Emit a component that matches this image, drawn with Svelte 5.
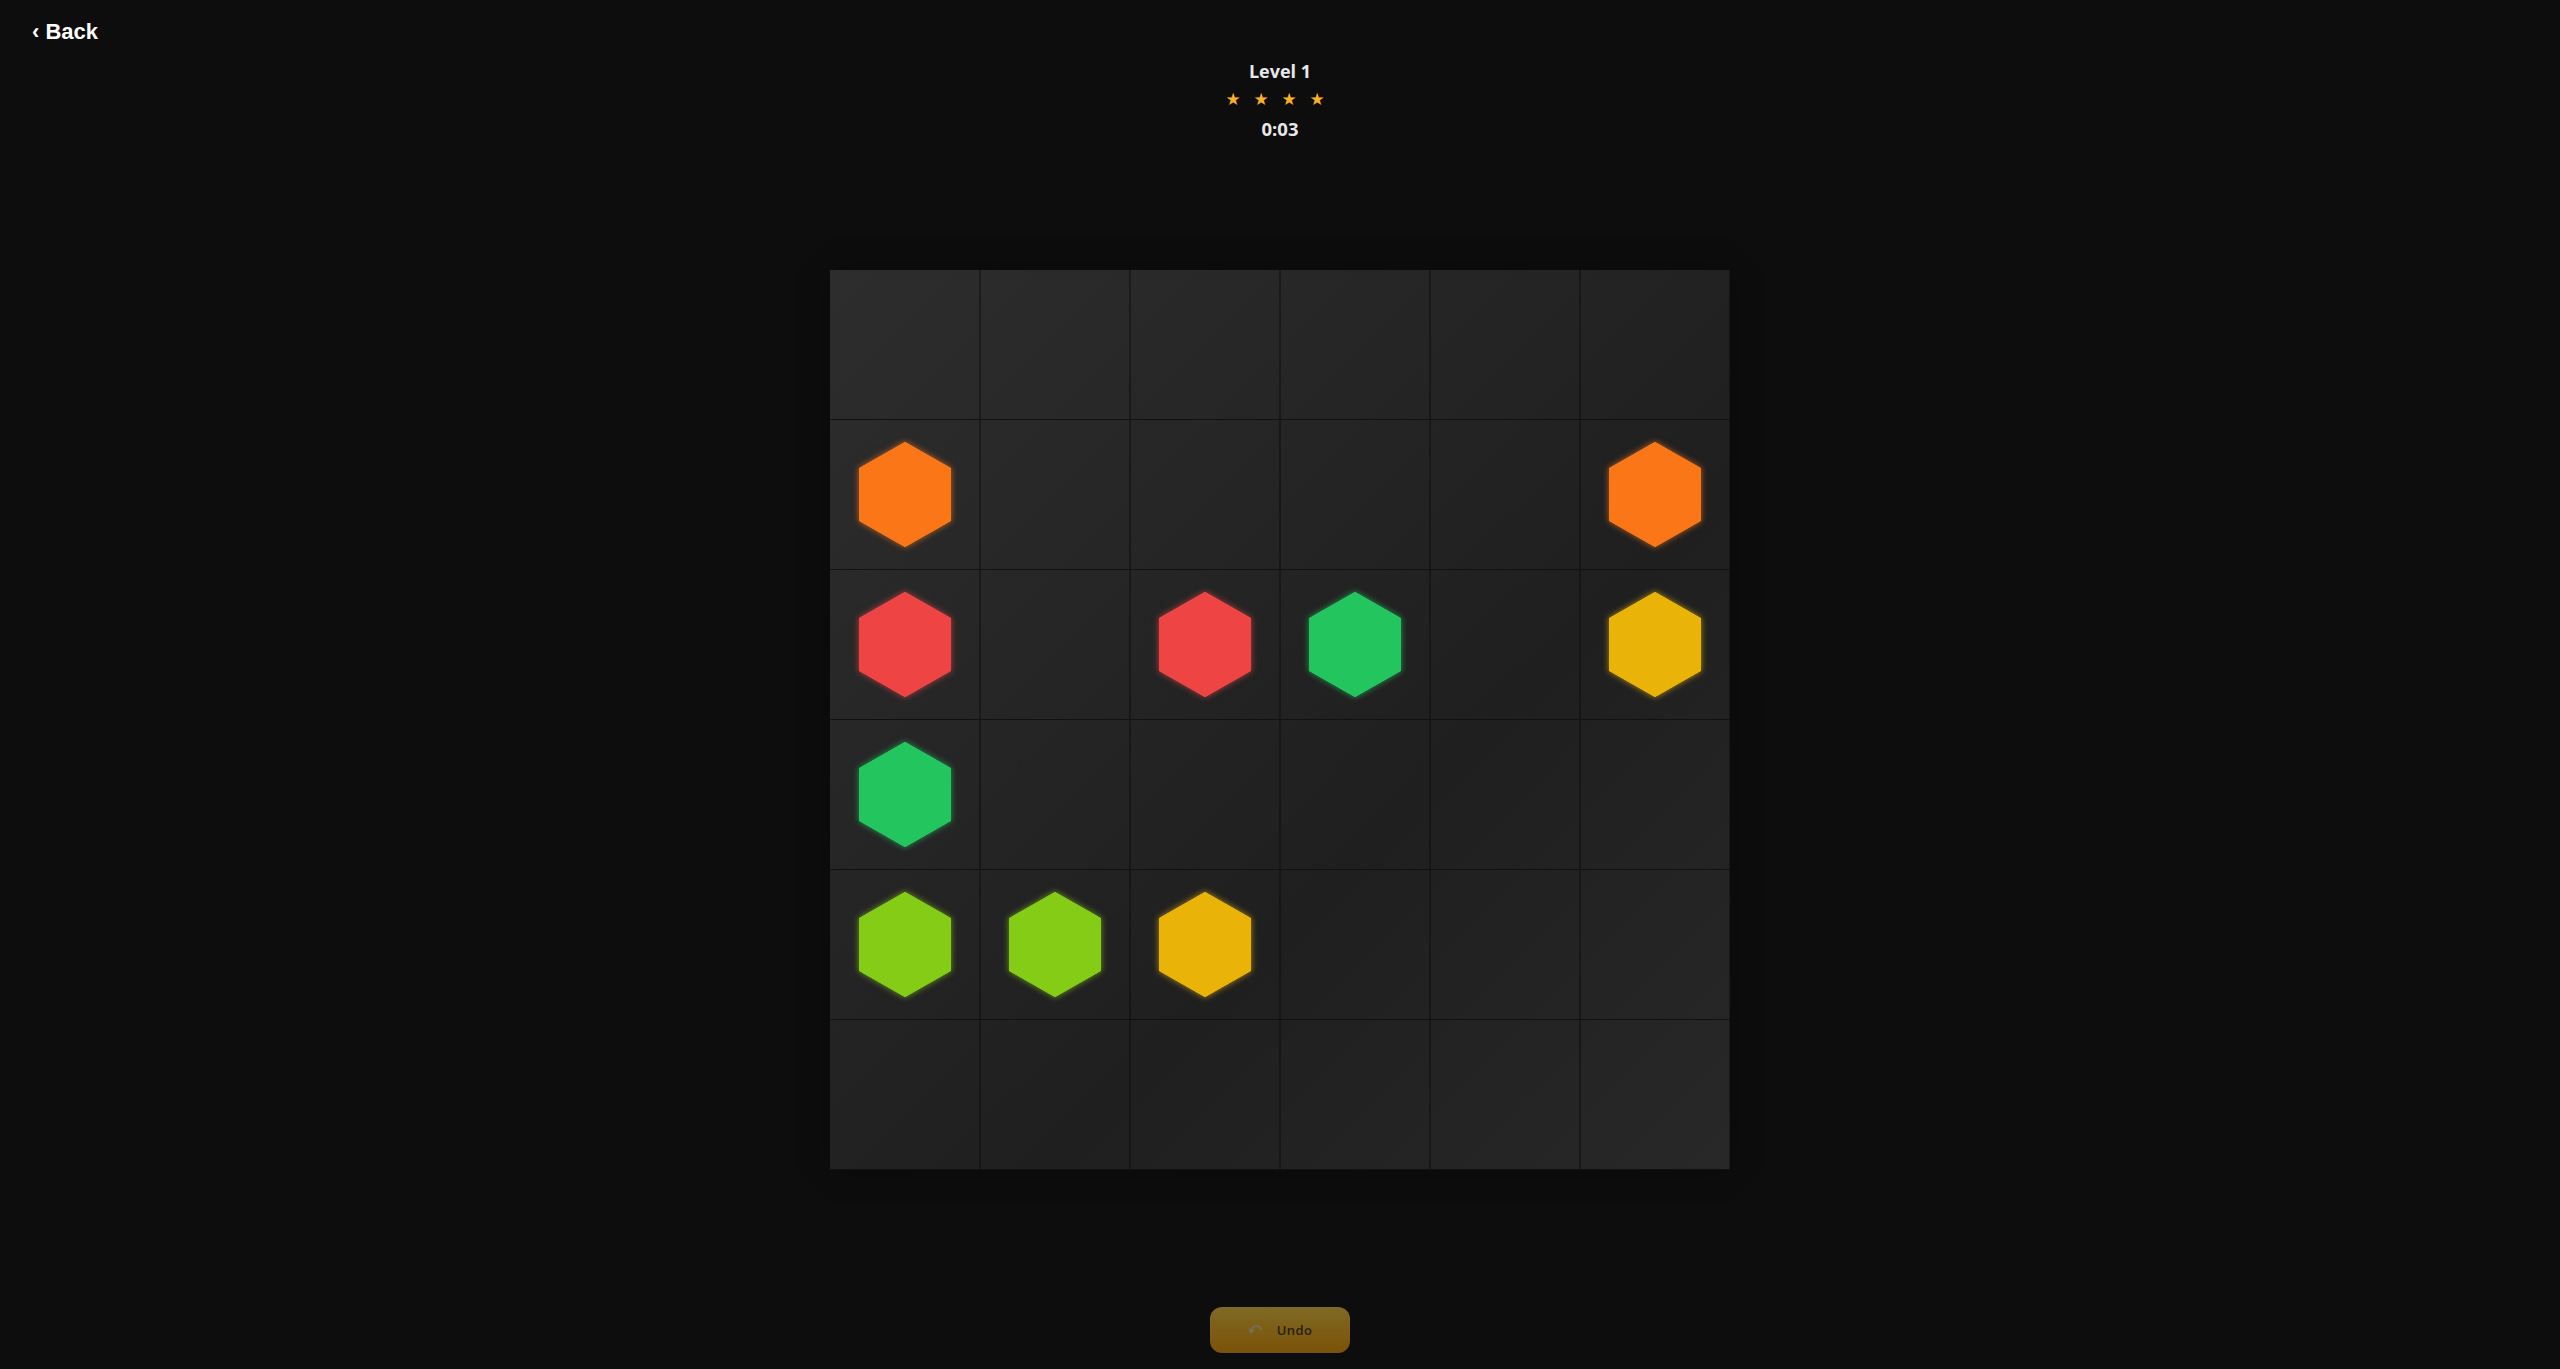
<script>
  const size = 6;
  // board layout: [row, col, colour]
  const hexes = [
    [1, 0, 'orange'], [1, 5, 'orange'],
    [2, 0, 'red'], [2, 2, 'red'], [2, 3, 'green'], [2, 5, 'yellow'],
    [3, 0, 'green'],
    [4, 0, 'lime'], [4, 1, 'lime'], [4, 2, 'yellow']
  ];
  const cells = [];
  for (let r = 0; r < size; r++) {
    for (let c = 0; c < size; c++) {
      const hex = hexes.find((h) => h[0] === r && h[1] === c);
      cells.push(hex ? hex[2] : null);
    }
  }
</script>

<div class="page">
  <button class="back">‹ Back</button>

  <header class="hud">
    <div class="level">Level 1</div>
    <div class="stars">★★★★</div>
    <div class="timer">0:03</div>
  </header>

  <main class="board-wrap">
    <div class="board">
      {#each cells as color}
        <div class="cell">
          {#if color}
            <div class="hex {color}"><div class="fill"></div></div>
          {/if}
        </div>
      {/each}
    </div>
  </main>

  <footer class="actions">
    <button class="undo">
      <svg class="icon" viewBox="0 0 14 10" width="14" height="10" aria-hidden="true">
        <path d="M13.4 5.4 C12.6 2.2 10.6 0.9 8.4 0.9 C6.2 0.9 4.6 2 3.6 4.6" fill="none" stroke="currentColor" stroke-width="1.5" />
        <path d="M0.6 3.4 L6.6 5 L2.4 9.6 Z" fill="currentColor" />
      </svg>
      <span>Undo</span>
    </button>
  </footer>
</div>

<style>
  :global(body) {
    margin: 0;
    background: #0d0d0d;
  }
  .page {
    position: relative;
    height: 1369px;
    display: flex;
    flex-direction: column;
    align-items: center;
    font-family: "Open Sans", sans-serif;
    overflow: hidden;
  }
  .back {
    position: absolute;
    top: 19px;
    left: 32px;
    padding: 0;
    border: none;
    background: none;
    color: #fff;
    font: bold 22px "Liberation Sans", sans-serif;
  }
  .hud {
    display: flex;
    flex-direction: column;
    align-items: center;
    padding-top: 58px;
    color: #e8e8e8;
    height: 270px;
    box-sizing: border-box;
  }
  .level {
    font-size: 18px;
    font-weight: 700;
    line-height: 26px;
  }
  .stars {
    margin-top: 3px;
    padding-left: 3px;
    color: #fbb024;
    font: 17px/24px "DejaVu Sans", sans-serif;
    letter-spacing: 12.8px;
  }
  .timer {
    margin-top: 5px;
    font-size: 18.5px;
    font-weight: 700;
    line-height: 26px;
  }
  .board-wrap {
    height: 900px;
  }
  .board {
    display: grid;
    grid-template-columns: repeat(6, 150px);
    grid-template-rows: repeat(6, 150px);
    background: linear-gradient(135deg, #2d2d2d 0%, #1f1f1f 62%, #282828 100%);
    box-shadow: 0 0 30px rgba(0, 0, 0, 0.25);
  }
  .cell {
    display: flex;
    align-items: center;
    justify-content: center;
    box-sizing: border-box;
    border-left: 1px solid rgba(10, 10, 10, 0.45);
    border-right: 1px solid rgba(10, 10, 10, 0.45);
    border-bottom: 1px solid #111;
  }
  .cell:nth-child(6n + 1) {
    border-left-color: transparent;
  }
  .hex {
    width: 92px;
    height: 105px;
  }
  .fill {
    width: 100%;
    height: 100%;
    clip-path: polygon(50% 0, 100% 25%, 100% 75%, 50% 100%, 0 75%, 0 25%);
  }
  .orange { filter: drop-shadow(0 0 0.5px #fb9a50) drop-shadow(0 0 3px rgba(251, 118, 23, 0.75)); }
  .orange .fill { background: #fb7617; }
  .red { filter: drop-shadow(0 0 0.5px #f47070) drop-shadow(0 0 3px rgba(239, 68, 68, 0.75)); }
  .red .fill { background: #ef4444; }
  .green { filter: drop-shadow(0 0 0.5px #50d880) drop-shadow(0 0 3px rgba(34, 197, 94, 0.75)); }
  .green .fill { background: #22c55e; }
  .yellow { filter: drop-shadow(0 0 0.5px #f0c840) drop-shadow(0 0 3px rgba(234, 179, 8, 0.75)); }
  .yellow .fill { background: #eab308; }
  .lime { filter: drop-shadow(0 0 0.5px #a4dc50) drop-shadow(0 0 3px rgba(132, 204, 22, 0.75)); }
  .lime .fill { background: #84cc16; }
  .actions {
    margin-top: 137px;
  }
  .undo {
    display: flex;
    align-items: center;
    justify-content: center;
    gap: 15px;
    width: 140px;
    height: 46px;
    padding: 0;
    border: none;
    border-radius: 12px;
    background: linear-gradient(180deg, #7f6a24 0%, #7b5208 100%);
    color: #262110;
    font: 600 13px "Open Sans", sans-serif;
    letter-spacing: 0.4px;
  }
  .icon {
    color: #777060;
  }
</style>
